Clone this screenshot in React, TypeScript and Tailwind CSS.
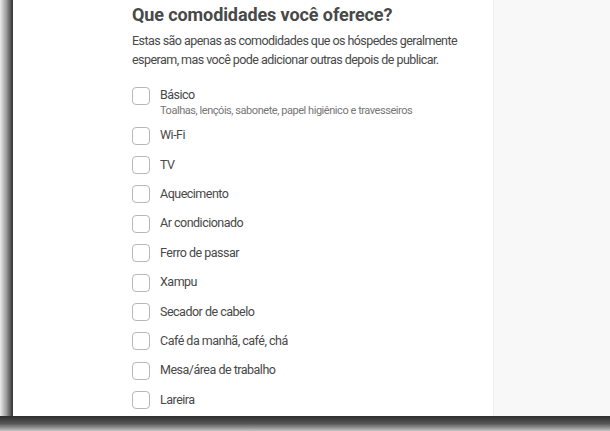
import React from "react";

const items = [
  "Wi-Fi",
  "TV",
  "Aquecimento",
  "Ar condicionado",
  "Ferro de passar",
  "Xampu",
  "Secador de cabelo",
  "Café da manhã, café, chá",
  "Mesa/área de trabalho",
  "Lareira",
];

function Box() {
  return (
    <span className="block w-[18px] h-[18px] shrink-0 rounded-[4px] border border-[#b8b8b8] bg-white" />
  );
}

export default function App() {
  return (
    <div
      className="w-[610px] h-[431px] overflow-hidden flex flex-col bg-white"
      style={{ fontFamily: "Roboto, 'Liberation Sans', sans-serif" }}
    >
      <div className="flex h-[416px]">
        <div className="w-[13px] shrink-0 bg-gradient-to-r from-[#ececec] via-[#9a9a9a] to-[#333333]" />
        <main className="flex-1 bg-white pl-[119px] pt-[3px]">
          <h1 className="text-[18px] leading-[24px] font-bold text-[#484848] tracking-[-0.1px]">
            Que comodidades você oferece?
          </h1>
          <p className="mt-[4px] text-[12.5px] leading-[19px] text-[#484848] tracking-[-0.55px] w-[345px]">
            Estas são apenas as comodidades que os hóspedes geralmente esperam, mas você pode adicionar outras depois de publicar.
          </p>
          <ul className="mt-[18px] flex flex-col">
            <li className="flex gap-[10px] h-[34px]">
              <Box />
              <div className="flex flex-col">
                <span className="text-[12.5px] leading-[16px] text-[#484848] tracking-[-0.5px]">Básico</span>
                <span className="text-[11px] leading-[14px] text-[#767676] mt-[1px] tracking-[-0.45px]">
                  Toalhas, lençóis, sabonete, papel higiênico e travesseiros
                </span>
              </div>
            </li>
            {items.map((t) => (
              <li key={t} className="flex items-center gap-[10px] h-[29.4px]">
                <Box />
                <span className="text-[12.5px] text-[#484848] tracking-[-0.5px]">{t}</span>
              </li>
            ))}
          </ul>
        </main>
        <aside className="w-[117px] shrink-0 bg-[#f8f8f8] border-l border-[#f0f0f0]" />
      </div>
      <div className="h-[15px] bg-gradient-to-b from-[#2e2e2e] via-[#555555] to-[#c4c4c4]" />
    </div>
  );
}
